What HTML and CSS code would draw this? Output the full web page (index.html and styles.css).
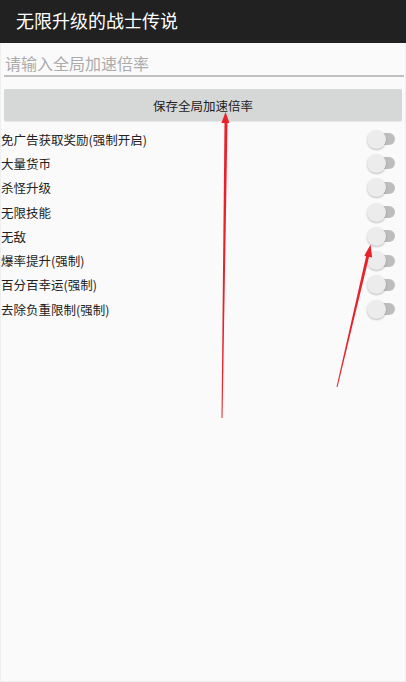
FILE: index.html
```html
<!DOCTYPE html>
<html lang="zh-CN">
<head>
    <meta charset="UTF-8">
    <meta name="viewport" content="width=device-width, initial-scale=1.0">
    <title>无限升级的战士传说</title>
    <link rel="stylesheet" href="styles.css">
</head>
<body>
    <div class="page">
        <div class="app-bar">无限升级的战士传说</div>

        <!-- 全局加速 -->
        <input class="speed-input" type="text" placeholder="请输入全局加速倍率">
        <button class="save-btn" type="button">保存全局加速倍率</button>

        <!-- 功能开关 -->
        <div class="options">
            <label class="option"><span>免广告获取奖励(强制开启)</span><input type="checkbox"><i class="switch"></i></label>
            <label class="option"><span>大量货币</span><input type="checkbox"><i class="switch"></i></label>
            <label class="option"><span>杀怪升级</span><input type="checkbox"><i class="switch"></i></label>
            <label class="option"><span>无限技能</span><input type="checkbox"><i class="switch"></i></label>
            <label class="option"><span>无敌</span><input type="checkbox"><i class="switch"></i></label>
            <label class="option"><span>爆率提升(强制)</span><input type="checkbox"><i class="switch"></i></label>
            <label class="option"><span>百分百幸运(强制)</span><input type="checkbox"><i class="switch"></i></label>
            <label class="option"><span>去除负重限制(强制)</span><input type="checkbox"><i class="switch"></i></label>
        </div>

        <!-- 标注箭头 -->
        <svg class="marks" width="406" height="682" viewBox="0 0 406 682">
            <polygon points="221.5,418 222.5,418 227.5,122 224.5,122" fill="#e8212b"/>
            <polygon points="221.4,123 229.4,123 225.6,112" fill="#e8212b"/>
            <polygon points="336.5,386.9 337.5,387.1 369.5,255 366.5,254.4" fill="#e8212b"/>
            <polygon points="364.3,255.8 372.1,257.6 370.6,244.5" fill="#e8212b"/>
        </svg>
    </div>
</body>
</html>
```

FILE: styles.css
```css
body {
    margin: 0;
    padding: 0;
    background-color: #fafafa;
    font-family: "Noto Sans CJK SC", "Noto Sans", sans-serif;
}
.page {
    position: relative;
    min-height: 682px;
    box-shadow: inset 0 0 0 1px #efefef;
    overflow: hidden;
}
.app-bar {
    height: 43px;
    padding: 0 0 3px 16px;
    box-sizing: border-box;
    display: flex;
    align-items: center;
    background-color: #212121;
    color: #fff;
    font-size: 18px;
}
.speed-input {
    display: block;
    width: 398px;
    height: 25px;
    margin: 7px 4px 0;
    padding: 0 1px;
    box-sizing: content-box;
    border: none;
    border-bottom: 2px solid #c0c0c0;
    background: transparent;
    font-family: inherit;
    font-size: 16px;
    color: #222;
    outline: none;
}
.speed-input::placeholder {
    color: #ababab;
}
.save-btn {
    display: block;
    width: 398px;
    height: 32px;
    margin: 12px 4px 0;
    border: none;
    border-radius: 2px;
    background-color: #d6d7d7;
    box-shadow: 0 1px 1px rgba(0, 0, 0, 0.08);
    font-family: inherit;
    font-size: 12.5px;
    color: #222;
}
.options {
    margin-top: 6px;
}
.option {
    height: 24.3px;
    padding: 0 11px 0 1px;
    display: flex;
    align-items: center;
    justify-content: space-between;
    font-size: 12.5px;
    color: #222;
}
.option input {
    display: none;
}
.switch {
    position: relative;
    width: 28px;
    height: 19px;
}
/* 轨道 */
.switch::before {
    content: "";
    position: absolute;
    right: 0;
    top: 3.5px;
    width: 24px;
    height: 12px;
    border-radius: 6px;
    background-color: #bdbdbd;
}
/* 滑块 */
.switch::after {
    content: "";
    position: absolute;
    left: 0;
    top: 0;
    width: 19px;
    height: 19px;
    border-radius: 50%;
    background-color: #ececec;
    box-shadow: 0 1px 2px rgba(0, 0, 0, 0.25);
}
.marks {
    position: absolute;
    left: 0;
    top: 0;
    pointer-events: none;
}
```
